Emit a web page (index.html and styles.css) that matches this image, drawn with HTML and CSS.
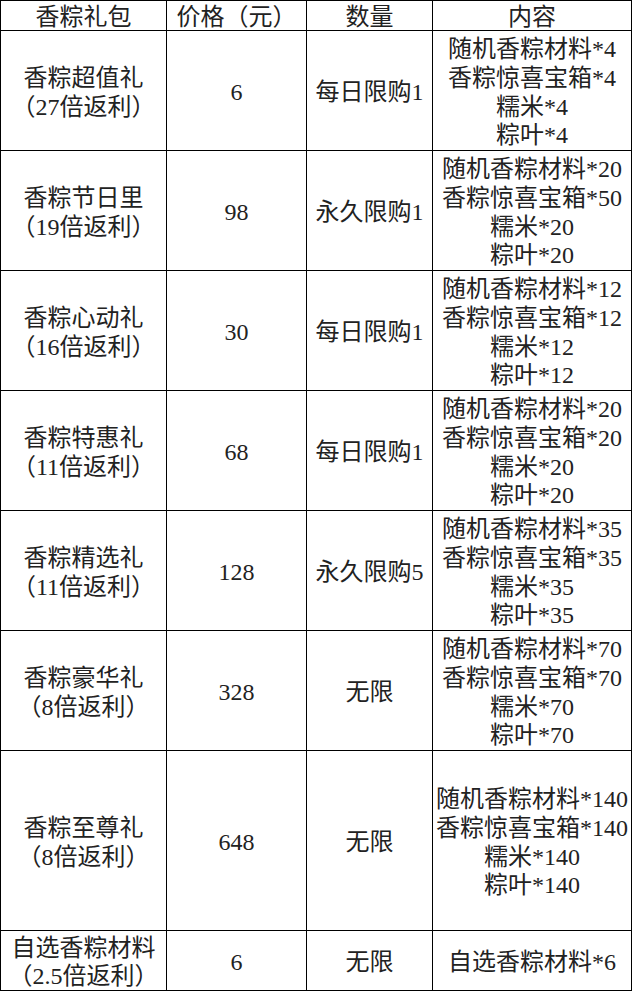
FILE: index.html
```html
<!DOCTYPE html>
<html lang="zh-CN">
<head>
<meta charset="utf-8">
<title>香粽礼包</title>
<link rel="stylesheet" href="styles.css">
</head>
<body>
<table class="gift-table">
  <colgroup>
    <col class="c-name">
    <col class="c-price">
    <col class="c-qty">
    <col class="c-content">
  </colgroup>
  <thead>
    <tr class="row-head">
      <th>香粽礼包</th>
      <th>价格（元）</th>
      <th>数量</th>
      <th>内容</th>
    </tr>
  </thead>
  <tbody>
    <tr class="row-std">
      <td>香粽超值礼<br>（27倍返利）</td>
      <td>6</td>
      <td>每日限购1</td>
      <td>随机香粽材料*4<br>香粽惊喜宝箱*4<br>糯米*4<br>粽叶*4</td>
    </tr>
    <tr class="row-std">
      <td>香粽节日里<br>（19倍返利）</td>
      <td>98</td>
      <td>永久限购1</td>
      <td>随机香粽材料*20<br>香粽惊喜宝箱*50<br>糯米*20<br>粽叶*20</td>
    </tr>
    <tr class="row-std">
      <td>香粽心动礼<br>（16倍返利）</td>
      <td>30</td>
      <td>每日限购1</td>
      <td>随机香粽材料*12<br>香粽惊喜宝箱*12<br>糯米*12<br>粽叶*12</td>
    </tr>
    <tr class="row-std">
      <td>香粽特惠礼<br>（11倍返利）</td>
      <td>68</td>
      <td>每日限购1</td>
      <td>随机香粽材料*20<br>香粽惊喜宝箱*20<br>糯米*20<br>粽叶*20</td>
    </tr>
    <tr class="row-std">
      <td>香粽精选礼<br>（11倍返利）</td>
      <td>128</td>
      <td>永久限购5</td>
      <td>随机香粽材料*35<br>香粽惊喜宝箱*35<br>糯米*35<br>粽叶*35</td>
    </tr>
    <tr class="row-std">
      <td>香粽豪华礼<br>（8倍返利）</td>
      <td>328</td>
      <td>无限</td>
      <td>随机香粽材料*70<br>香粽惊喜宝箱*70<br>糯米*70<br>粽叶*70</td>
    </tr>
    <tr class="row-tall">
      <td>香粽至尊礼<br>（8倍返利）</td>
      <td>648</td>
      <td>无限</td>
      <td>随机香粽材料*140<br>香粽惊喜宝箱*140<br>糯米*140<br>粽叶*140</td>
    </tr>
    <tr class="row-short">
      <td>自选香粽材料<br>（2.5倍返利）</td>
      <td>6</td>
      <td>无限</td>
      <td>自选香粽材料*6</td>
    </tr>
  </tbody>
</table>
</body>
</html>
```

FILE: styles.css
```css
html, body {
  margin: 0;
  padding: 0;
  background: #ffffff;
}

.gift-table {
  border-collapse: collapse;
  table-layout: fixed;
  width: 631px;
  font-family: "Liberation Serif", "Noto Sans CJK SC", serif;
  font-size: 24px;
  line-height: 28.75px;
  color: #222222;
}

.c-name { width: 166px; }
.c-price { width: 140px; }
.c-qty { width: 126px; }
.c-content { width: 199px; }

.gift-table th,
.gift-table td {
  border: 1px solid #000;
  padding: 4px 0 0;
  text-align: center;
  vertical-align: middle;
  font-weight: normal;
  white-space: nowrap;
}

.row-head th {
  height: 25px;
  line-height: 25px;
}
.row-std td { height: 115px; }
.row-tall td { height: 175px; }
.row-short td {
  height: 56px;
  padding-top: 3px;
  line-height: 28px;
}
```
